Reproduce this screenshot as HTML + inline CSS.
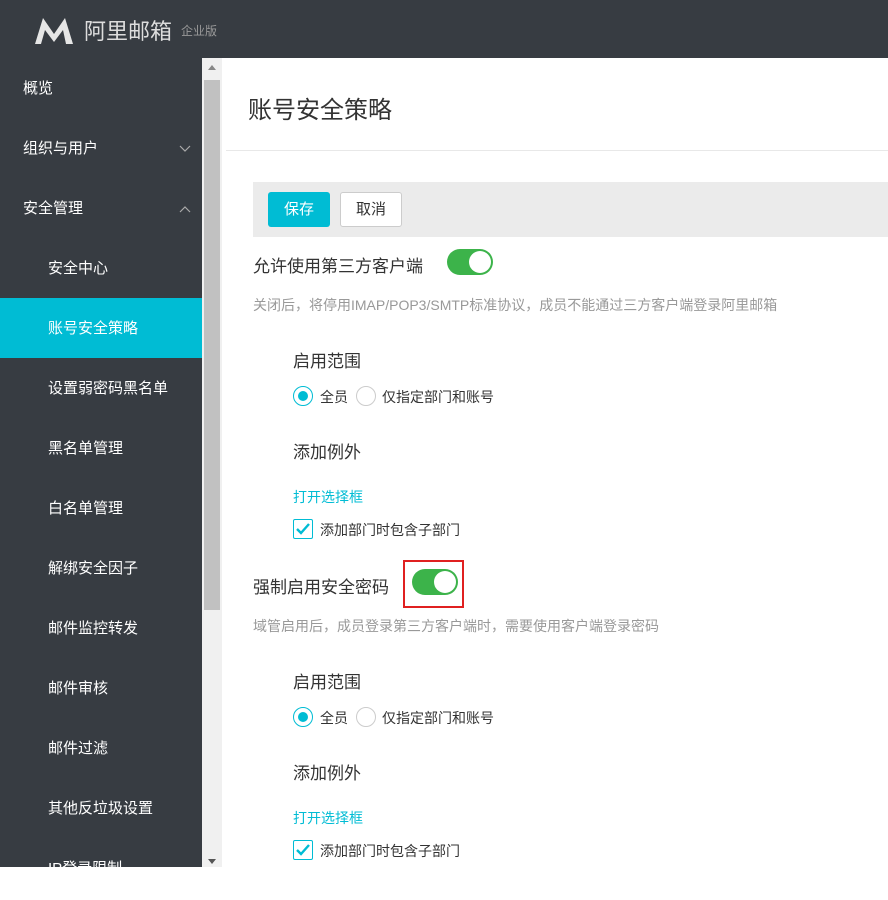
<!DOCTYPE html><html><head><meta charset="utf-8"><style>
*{margin:0;padding:0;box-sizing:border-box}
body{width:888px;height:867px;overflow:hidden;font-family:"Liberation Sans","Noto Sans CJK SC",sans-serif;background:#fff;position:relative;color:#333}
.top{position:absolute;left:0;top:0;width:888px;height:58px;background:#373c42}
.side{position:absolute;left:0;top:58px;width:202px;height:809px;background:#373c42}
.it{position:absolute;left:0;width:202px;height:60px;line-height:62px;color:#fff;font-size:15px}
.sb{position:absolute;left:202px;top:58px;width:20px;height:809px;background:#f0f0f0}
.th{position:absolute;left:204px;top:80px;width:16px;height:530px;background:#c1c1c1}
.a{position:absolute;white-space:nowrap}
.tog{position:absolute;width:46px;height:26px;border-radius:13px;background:#3cb34a}
.tog:after{content:"";position:absolute;right:2px;top:2px;width:22px;height:22px;border-radius:50%;background:#fff}
.rad{position:absolute;width:20px;height:20px;border-radius:50%;border:1px solid #ccc;background:#fff}
.rad.on{border-color:#00bcd4}.rad.on:after{content:"";position:absolute;left:4px;top:4px;width:10px;height:10px;border-radius:50%;background:#00bcd4}
.chk{position:absolute;width:20px;height:20px;border:1px solid #00bcd4;border-radius:2px}
svg.cv{position:absolute;left:179px;top:27px}
</style></head><body>
<div class="top">
<svg style="position:absolute;left:33px;top:16px" width="42" height="28" viewBox="0 0 42 28"><path d="M2 28 L10 2 L21 18 L32 2 L40 28 L33 28 L30 14 L21 26 L12 14 L8 28Z" fill="#e6e6e6"/></svg>
<div class="a" style="left:84px;top:14px;font-size:22px;color:#ddd">阿里邮箱</div>
<div class="a" style="left:181px;top:22px;font-size:12px;color:#999">企业版</div>
</div>
<div class="side">
<div class="it" style="top:0;padding-left:23px">概览</div>
<div class="it" style="top:60px;padding-left:23px">组织与用户<svg class="cv" width="12" height="8"><path d="M1 1 L6 6 L11 1" stroke="#aaa" fill="none" stroke-width="1.2"/></svg></div>
<div class="it" style="top:120px;padding-left:23px">安全管理<svg class="cv" width="12" height="8"><path d="M1 7 L6 2 L11 7" stroke="#aaa" fill="none" stroke-width="1.2"/></svg></div>
<div class="it" style="top:180px;padding-left:48px">安全中心</div>
<div class="it" style="top:240px;padding-left:48px;background:#00bcd4">账号安全策略</div>
<div class="it" style="top:300px;padding-left:48px">设置弱密码黑名单</div>
<div class="it" style="top:360px;padding-left:48px">黑名单管理</div>
<div class="it" style="top:420px;padding-left:48px">白名单管理</div>
<div class="it" style="top:480px;padding-left:48px">解绑安全因子</div>
<div class="it" style="top:540px;padding-left:48px">邮件监控转发</div>
<div class="it" style="top:600px;padding-left:48px">邮件审核</div>
<div class="it" style="top:660px;padding-left:48px">邮件过滤</div>
<div class="it" style="top:720px;padding-left:48px">其他反垃圾设置</div>
<div class="it" style="top:780px;padding-left:48px">IP登录限制</div>
</div>
<div class="sb"><div style="position:absolute;left:6px;top:7px;border:4px solid transparent;border-bottom:5px solid #888;border-top:0"></div><div style="position:absolute;left:6px;bottom:3px;border:4px solid transparent;border-top:5px solid #555;border-bottom:0"></div></div>
<div class="th"></div>
<div class="a" style="left:248px;top:90px;font-size:24px;color:#333">账号安全策略</div>
<div style="position:absolute;left:226px;top:150px;width:662px;height:1px;background:#e8e8e8"></div>
<div style="position:absolute;left:253px;top:182px;width:635px;height:55px;background:#ebebeb"></div>
<div style="position:absolute;left:268px;top:192px;width:62px;height:35px;background:#00bcd4;border-radius:3px;color:#fff;font-size:15px;line-height:35px;text-align:center">保存</div>
<div style="position:absolute;left:340px;top:192px;width:62px;height:35px;background:#fff;border:1px solid #ccc;border-radius:3px;font-size:15px;line-height:33px;text-align:center">取消</div>
<div class="a" style="left:253px;top:252px;font-size:17px">允许使用第三方客户端</div>
<div class="tog" style="left:447px;top:249px"></div>
<div class="a" style="left:253px;top:295px;font-size:14px;color:#999">关闭后，将停用IMAP/POP3/SMTP标准协议，成员不能通过三方客户端登录阿里邮箱</div>
<div class="a" style="left:293px;top:347px;font-size:17px">启用范围</div>
<div class="rad on" style="left:293px;top:386px"></div><div class="a" style="left:320px;top:387px;font-size:14px">全员</div>
<div class="rad" style="left:356px;top:386px"></div><div class="a" style="left:382px;top:387px;font-size:14px">仅指定部门和账号</div>
<div class="a" style="left:293px;top:438px;font-size:17px">添加例外</div>
<div class="a" style="left:293px;top:487px;font-size:14px;color:#00bcd4">打开选择框</div>
<div class="chk" style="left:293px;top:519px"><svg width="18" height="18"><path d="M3 9 L7 13 L15 4" stroke="#00bcd4" stroke-width="2.4" fill="none"/></svg></div>
<div class="a" style="left:320px;top:520px;font-size:14px">添加部门时包含子部门</div>
<div class="a" style="left:253px;top:573px;font-size:17px">强制启用安全密码</div>
<div style="position:absolute;left:403px;top:560px;width:61px;height:48px;border:2px solid #e02020"></div>
<div class="tog" style="left:412px;top:569px"></div>
<div class="a" style="left:253px;top:616px;font-size:14px;color:#999">域管启用后，成员登录第三方客户端时，需要使用客户端登录密码</div>
<div class="a" style="left:293px;top:668px;font-size:17px">启用范围</div>
<div class="rad on" style="left:293px;top:707px"></div><div class="a" style="left:320px;top:708px;font-size:14px">全员</div>
<div class="rad" style="left:356px;top:707px"></div><div class="a" style="left:382px;top:708px;font-size:14px">仅指定部门和账号</div>
<div class="a" style="left:293px;top:759px;font-size:17px">添加例外</div>
<div class="a" style="left:293px;top:808px;font-size:14px;color:#00bcd4">打开选择框</div>
<div class="chk" style="left:293px;top:840px"><svg width="18" height="18"><path d="M3 9 L7 13 L15 4" stroke="#00bcd4" stroke-width="2.4" fill="none"/></svg></div>
<div class="a" style="left:320px;top:841px;font-size:14px">添加部门时包含子部门</div>
</body></html>
